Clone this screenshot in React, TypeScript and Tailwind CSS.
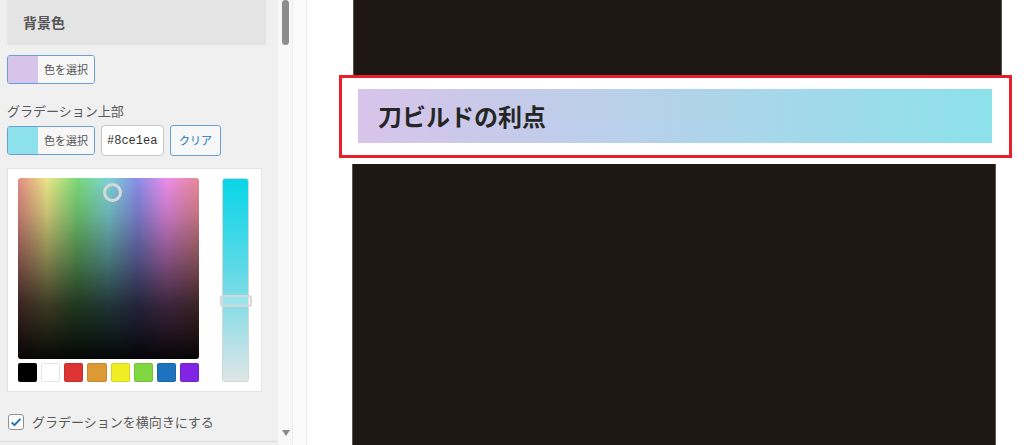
import React from 'react';

const JP = 'font-["Noto_Sans_CJK_JP","Noto_Sans",sans-serif]';

const SWATCHES = ['#000000', '#ffffff', '#dd3333', '#dd9933', '#eeee22', '#81d742', '#1e73be', '#8224e3'];

const ColorButton = ({ color }: { color: string }) => (
  <div className="flex h-[29px] w-[88px] overflow-hidden rounded-[3px] border border-[#6a9fd6]">
    <span className="w-[30px]" style={{ backgroundColor: color }} />
    <span className="flex flex-1 items-center justify-center bg-[#f7f7f7] text-[11px] text-[#555]">
      色を選択
    </span>
  </div>
);

const Sidebar = () => (
  <div className="relative flex h-full w-[278px] flex-col bg-[#f0f0f0] px-[7px]">
    {/* section header */}
    <div className="flex h-[45px] w-[259px] items-center bg-[#e4e4e4] pl-4 text-[14px] font-bold text-[#555]">
      背景色
    </div>

    <div className="mt-[10px]">
      <ColorButton color="#d8c4ea" />
    </div>

    <p className="mt-[19px] text-[13px] leading-[16px] text-[#5a5a5a]">グラデーション上部</p>

    <div className="mt-[6px] flex items-center gap-[6px]">
      <ColorButton color="#8ce1ea" />
      <div className="flex h-[31px] w-[63px] items-center rounded-[4px] border border-[#c6c6c6] bg-white pl-[5px] font-['Liberation_Mono',monospace] text-[12px] text-[#333]">
        #8ce1ea
      </div>
      <div className="flex h-[31px] w-[51px] items-center justify-center rounded-[3px] border border-[#6a9fd6] bg-[#f6f7f7] text-[11px] text-[#2271b1]">
        クリア
      </div>
    </div>

    {/* color picker */}
    <div className="mt-[12px] flex h-[224px] w-[255px] gap-[23px] border border-[#e2e2e2] bg-white pl-[10px] pt-[9px]">
      <div className="flex flex-col gap-[4px]">
        <div className="relative h-[181px] w-[181px] overflow-hidden rounded-[3px] bg-[linear-gradient(to_right,#e88e86,#f0ea8a_16%,#7cdc7c_33%,#80d8dc_50%,#8c90ec_66%,#f090ee_82%,#ec8c98)]">
          <div className="absolute inset-0 bg-[linear-gradient(to_bottom,rgba(0,0,0,0.02),rgba(0,0,0,0.18)_20%,rgba(0,0,0,0.45)_45%,rgba(0,0,0,0.75)_70%,rgba(0,0,0,0.97))]" />
          <div className="absolute left-[85px] top-[5px] h-[19px] w-[19px] rounded-full border-[3px] border-[#d8d8d8]" />
        </div>
        <div className="grid w-[181px] grid-cols-8 gap-[4px]">
          {SWATCHES.map((c) => (
            <span
              key={c}
              className="h-[19px] rounded-[2px] border border-black/10"
              style={{ backgroundColor: c }}
            />
          ))}
        </div>
      </div>
      <div className="relative h-[204px] w-[27px] rounded-[3px] border border-[#cfd8da] bg-[linear-gradient(to_bottom,#08d6e8,#5ed9e6_45%,#a6dfe6_75%,#dfe5e7)]">
        <div className="absolute left-[-3px] top-[116px] h-[12px] w-[32px] rounded-[3px] border-2 border-[#d6d6d6] bg-white/20" />
      </div>
    </div>

    <div className="mt-[20px] flex items-center gap-[8px] pl-[1px]">
      <span className="flex h-[16px] w-[16px] items-center justify-center rounded-[3px] border border-[#8c8f94] bg-white">
        <svg viewBox="0 0 16 16" className="h-[14px] w-[14px]">
          <path d="M3 8.5l3.2 3.2L13 4.5" fill="none" stroke="#2271b1" strokeWidth="2.2" />
        </svg>
      </span>
      <span className="text-[13px] text-[#5a5a5a]">グラデーションを横向きにする</span>
    </div>

    <div className="absolute bottom-[3px] left-0 right-0 border-t border-[#dcdcdc]" />
  </div>
);

const Scrollbar = () => (
  <div className="relative h-full w-[15px] border-r border-[#ececec] bg-[#f8f8f8]">
    <div className="ml-[4px] h-[45px] w-[7px] rounded-[4px] bg-[#8d8d8d]" />
    <svg viewBox="0 0 8 6" className="absolute bottom-[9px] left-[4px] h-[6px] w-[8px]">
      <path d="M0 0h8L4 6z" fill="#8a8a8a" />
    </svg>
  </div>
);

export default function App() {
  return (
    <div className={`flex h-[445px] w-[1024px] overflow-hidden bg-white ${JP}`}>
      <Sidebar />
      <Scrollbar />
      <div className="h-full w-[14px] border-r border-[#e9e9e9] bg-[#fbfbfb]" />

      {/* preview */}
      <div className="flex flex-1 flex-col">
        <div className="ml-[46px] h-[75px] w-[649px] border-x border-[#5a5450] bg-[#1f1812]" />
        <div className="ml-[32px] h-[83px] w-[673px] border-[3px] border-[#e8202c] bg-white pl-[16px] pt-[11px]">
          <div className="flex h-[54px] w-[634px] items-center bg-[linear-gradient(to_right,#d8c4ea,#8ce1ea)] pl-[20px] text-[24px] font-bold text-[#262626]">
            刀ビルドの利点
          </div>
        </div>
        <div className="ml-[45px] mt-[6px] w-[644px] flex-1 border-x border-[#5a5450] bg-[#1f1812]" />
      </div>
    </div>
  );
}
